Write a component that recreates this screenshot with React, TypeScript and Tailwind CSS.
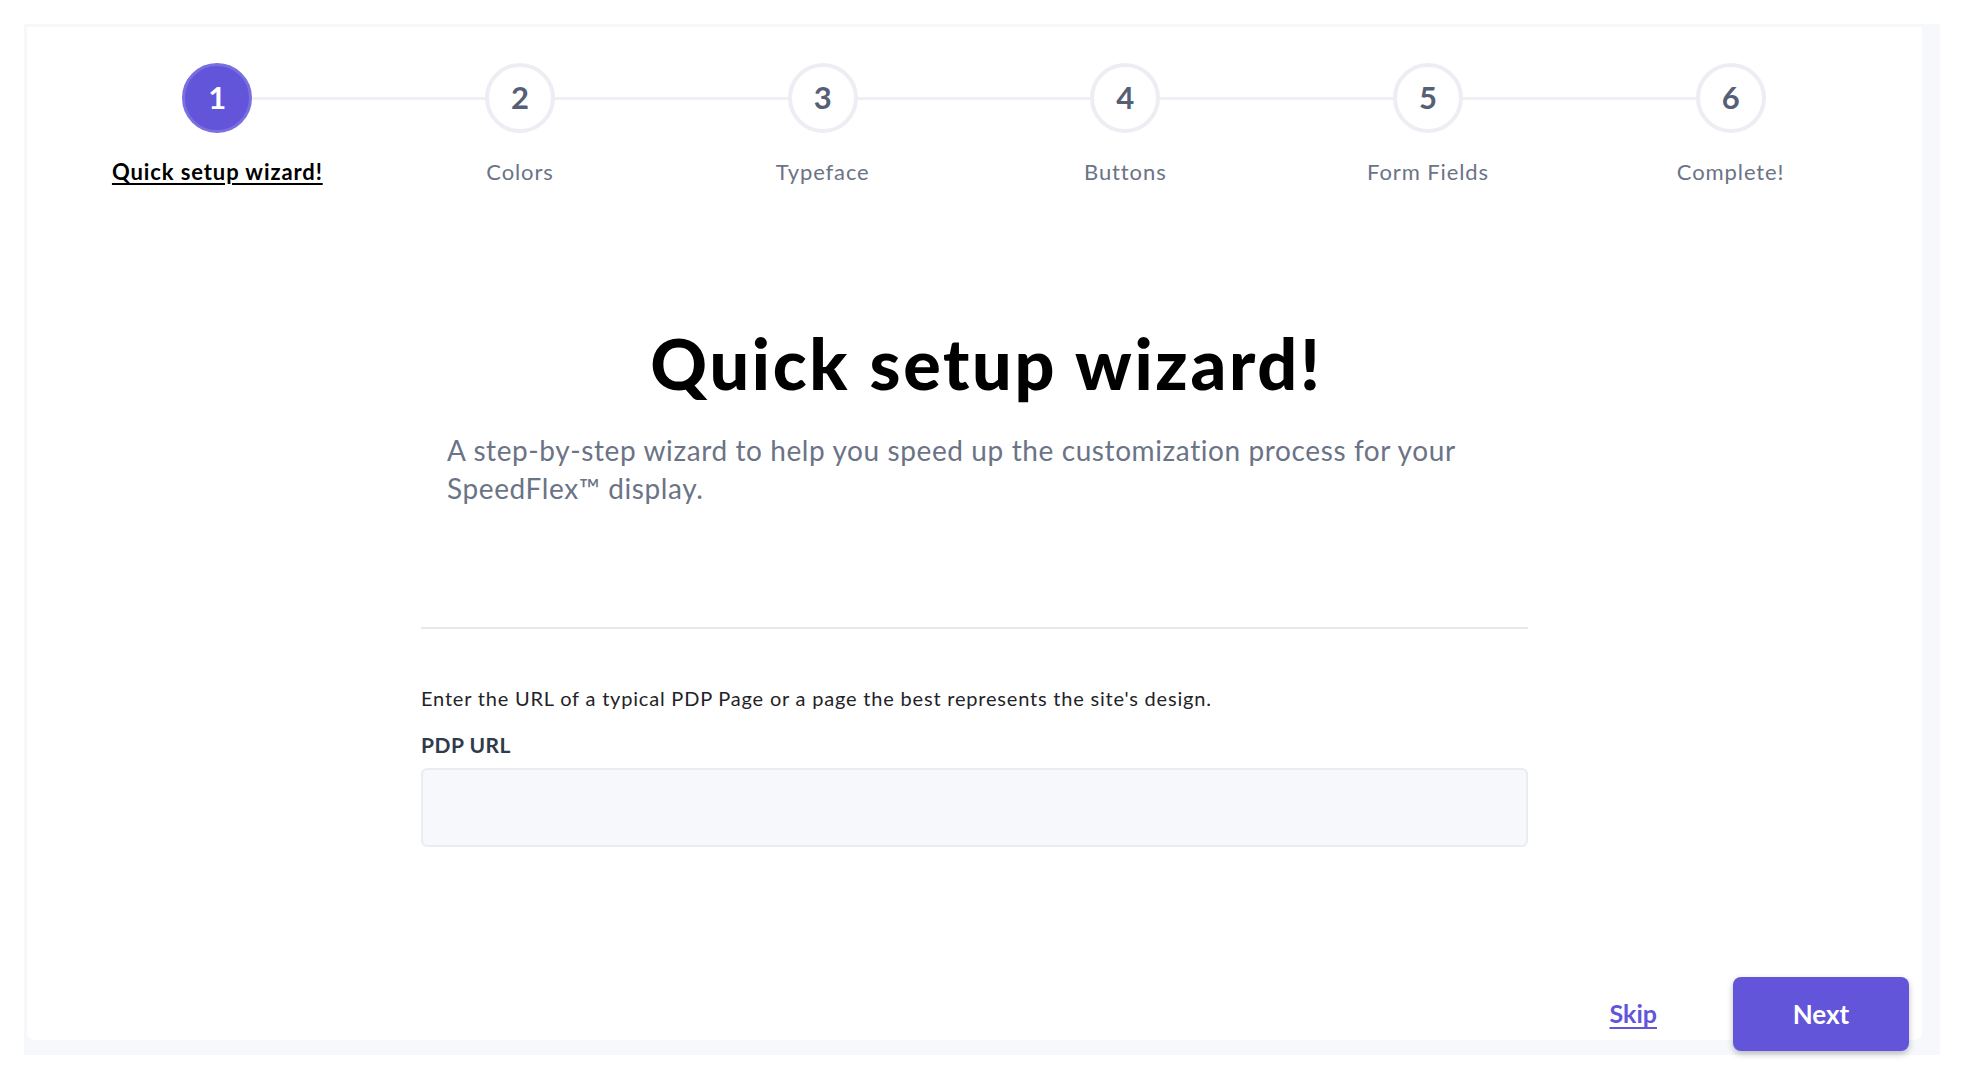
const STEPS = ['Quick setup wizard!', 'Colors', 'Typeface', 'Buttons', 'Form Fields', 'Complete!']

function Stepper({ current }: { current: number }) {
    return (
        <div className="grid grid-cols-6 pl-[39px] pr-[40px] pt-[36px]">
            {STEPS.map((label, i) => {
                const active = i === current
                return (
                    <div key={label} className="flex flex-col items-center">
                        <div className="flex w-full items-center">
                            <div className={i === 0 ? 'h-[3px] flex-1' : 'h-[3px] flex-1 bg-[#eef0f5]'} />
                            {active ? (
                                <div className="flex h-[70px] w-[70px] items-center justify-center rounded-full border-[3px] border-[#7a6fe0] bg-[#6255da] pb-[2px] text-[31px] font-bold text-white">
                                    {i + 1}
                                </div>
                            ) : (
                                <div className="flex h-[70px] w-[70px] items-center justify-center rounded-full border-4 border-[#eceef4] bg-white pb-[2px] text-[31px] font-bold text-[#566074]">
                                    {i + 1}
                                </div>
                            )}
                            <div className={i === STEPS.length - 1 ? 'h-[3px] flex-1' : 'h-[3px] flex-1 bg-[#eef0f5]'} />
                        </div>
                        <div
                            className={
                                active
                                    ? 'mt-[25px] text-[22px] leading-[28px] tracking-[0.9px] font-bold text-black underline underline-offset-[3px] decoration-[2px]'
                                    : 'mt-[25px] text-[22px] leading-[28px] tracking-[0.9px] text-[#6b7386]'
                            }
                        >
                            {label}
                        </div>
                    </div>
                )
            })}
        </div>
    )
}

export default function App() {
    return (
        <div className="min-h-screen bg-white pl-[24px] pt-[24px] font-['Lato',sans-serif] antialiased">
            <div className="h-[1031px] w-[1916px] bg-[#f7f8fc] pb-[15px] pl-[3px] pr-[18px] pt-[3px]">
                <div className="flex h-full flex-col rounded-b-lg bg-white">
                    <Stepper current={0} />

                    <div className="mx-auto flex w-[1107px] flex-col">
                        <h1 className="mt-[142px] pl-[24px] text-center text-[70px] leading-[70px] font-black tracking-[2.7px] text-black">
                            Quick setup wizard!
                        </h1>
                        <p className="mt-[33px] px-[26px] text-[28px] leading-[38px] tracking-[0.6px] text-[#6b7386]">
                            A step-by-step wizard to help you speed up the customization process for your
                            <br />
                            SpeedFlex™ display.
                        </p>

                        <div className="mt-[120px] h-[2px] bg-[#e7e8ec]" />

                        <p className="mt-[55px] text-[20px] leading-[28px] tracking-[0.8px] text-[#1f2328]">
                            Enter the URL of a typical PDP Page or a page the best represents the site's design.
                        </p>
                        <label className="mt-[19px] text-[21px] leading-[28px] tracking-[0.5px] font-bold text-[#2f3a4a]">PDP URL</label>
                        <input
                            type="text"
                            className="mt-[9px] h-[79px] w-full rounded-md border-2 border-[#eaecf2] bg-[#f7f8fc] px-4 text-[20px] outline-none"
                        />
                    </div>

                    <div className="mt-[130px] flex items-center justify-end gap-[76px] pr-[13px]">
                        <a href="#" className="text-[25px] font-bold text-[#6255da] underline underline-offset-[4px] decoration-[2px]">
                            Skip
                        </a>
                        <button className="h-[74px] w-[176px] rounded-lg bg-[#6255da] text-[26px] font-bold text-white shadow-[0_3px_6px_rgba(0,0,0,0.25)]">
                            Next
                        </button>
                    </div>
                </div>
            </div>
        </div>
    )
}
